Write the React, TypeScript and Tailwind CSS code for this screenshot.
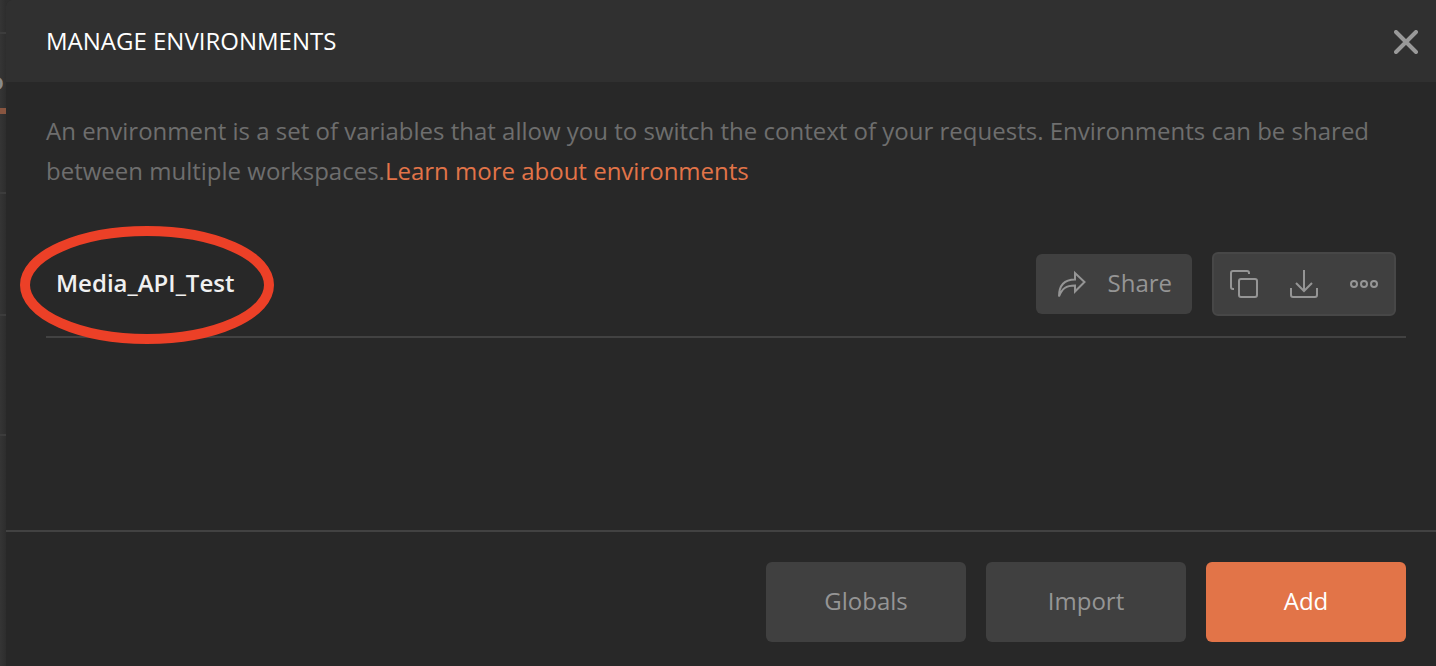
import React from "react";

const environments = ["Media_API_Test"];

function CloseIcon() {
  return (
    <svg width="24" height="24" viewBox="0 0 24 24" fill="none" stroke="#999999" strokeWidth="4" strokeLinecap="round" aria-hidden="true">
      <path d="M2 2 22 22M22 2 2 22" />
    </svg>
  );
}

function ShareIcon() {
  return (
    <svg width="28" height="28" viewBox="0 0 28 28" fill="none" stroke="#959595" strokeWidth="2" strokeLinejoin="miter" aria-hidden="true">
      <path d="M17 3V9.5C7 9.5 1 15 1 26.5C4 18.5 8 15.5 17 15.5V21.5L26.5 12Z" />
    </svg>
  );
}

function DuplicateIcon() {
  return (
    <svg width="28" height="28" viewBox="0 0 28 28" fill="none" stroke="#959595" strokeWidth="2" aria-hidden="true">
      <rect x="9" y="9" width="18" height="18" rx="2" />
      <path d="M4 19H3a2 2 0 0 1-2-2V3a2 2 0 0 1 2-2H17a2 2 0 0 1 2 2V4" />
    </svg>
  );
}

function DownloadIcon() {
  return (
    <svg width="28" height="28" viewBox="0 0 28 28" fill="none" stroke="#959595" strokeWidth="2" aria-hidden="true">
      <path d="M14 0V21M6 13L14 21L22 13M1 18V25a2 2 0 0 0 2 2H25a2 2 0 0 0 2-2V18" />
    </svg>
  );
}

function MoreIcon() {
  return (
    <svg width="28" height="28" viewBox="0 0 28 28" fill="none" stroke="#959595" strokeWidth="2" aria-hidden="true">
      <circle cx="4" cy="14" r="3" />
      <circle cx="14" cy="14" r="3" />
      <circle cx="24" cy="14" r="3" />
    </svg>
  );
}

function Backdrop() {
  return (
    <div className="flex w-1.5 shrink-0 flex-col overflow-hidden bg-linear-to-r from-[#353535] to-[#2d2d2d]" aria-hidden="true">
      <div className="h-[34px] shrink-0 border-b-2 border-[#3c3c3c]" />
      <div className="flex h-20 shrink-0 items-center justify-end border-b-6 border-[#885540] pr-0.5 pt-5 text-2xl font-semibold text-[#8a8a8a]">
        <span>o</span>
      </div>
      <div className="h-20 shrink-0 border-b-2 border-[#3c3c3c]" />
      <div className="h-[122px] shrink-0 border-b-2 border-[#3c3c3c]" />
      <div className="h-[120px] shrink-0 border-b-2 border-[#3c3c3c]" />
    </div>
  );
}

function EnvironmentRow({ name }: { name: string }) {
  return (
    <li className="flex items-center justify-between border-b-2 border-[#424242] px-2.5 py-5">
      <div className="relative pb-0.5">
        <span className="font-semibold text-[#f0f0f0]">{name}</span>
        <svg
          className="pointer-events-none absolute -left-9 top-1/2 -translate-y-1/2"
          width="254"
          height="120"
          viewBox="0 0 254 120"
          fill="none"
          stroke="#ec4027"
          strokeWidth="10"
          aria-hidden="true"
        >
          <ellipse cx="127" cy="61" rx="122" ry="54" />
        </svg>
      </div>
      <div className="flex items-center gap-5">
        <button type="button" className="flex h-15 items-center gap-[22px] rounded-md bg-[#404040] pl-[22px] pr-5 text-[#959595]">
          <ShareIcon />
          <span className="pb-0.5">Share</span>
        </button>
        <div className="flex rounded-md border-2 border-[#474747] bg-[#404040]">
          <button type="button" aria-label="Duplicate" className="grid size-15 place-items-center">
            <DuplicateIcon />
          </button>
          <button type="button" aria-label="Download" className="grid size-15 place-items-center">
            <DownloadIcon />
          </button>
          <button type="button" aria-label="More actions" className="grid size-15 place-items-center">
            <MoreIcon />
          </button>
        </div>
      </div>
    </li>
  );
}

export default function App() {
  return (
    <div className="flex min-h-screen bg-[#2e2e2e] font-['Open_Sans',sans-serif] text-2xl leading-10">
      <Backdrop />
      <section role="dialog" aria-labelledby="dialog-title" className="flex min-w-0 flex-1 flex-col rounded-tl-md bg-[#282828]">
        <header className="flex items-center justify-between rounded-tl-md bg-[#303030] py-5 pl-10 pr-[18px]">
          <h1 id="dialog-title" className="text-white">MANAGE ENVIRONMENTS</h1>
          <button type="button" aria-label="Close" className="grid h-[42px] place-items-center pt-0.5">
            <CloseIcon />
          </button>
        </header>
        <main className="flex-1 pl-10 pr-[30px] pt-[29px]">
          <p className="text-[#6e6e6e]">
            An environment is a set of variables that allow you to switch the context of your requests. Environments can be shared between multiple workspaces.
            <a href="#learn" className="text-[#e27448]">Learn more about environments</a>
          </p>
          <ul className="mt-[41px]">
            {environments.map((name) => (
              <EnvironmentRow key={name} name={name} />
            ))}
          </ul>
        </main>
        <footer className="flex justify-end gap-5 border-t-2 border-[#424242] pb-6 pr-[30px] pt-[30px]">
          <button type="button" className="h-20 w-50 rounded-md bg-[#404040] pb-0.5 text-[#959595]">Globals</button>
          <button type="button" className="h-20 w-50 rounded-md bg-[#404040] pb-0.5 text-[#959595]">Import</button>
          <button type="button" className="h-20 w-50 rounded-md bg-[#e27448] pb-0.5 text-white">Add</button>
        </footer>
      </section>
    </div>
  );
}
